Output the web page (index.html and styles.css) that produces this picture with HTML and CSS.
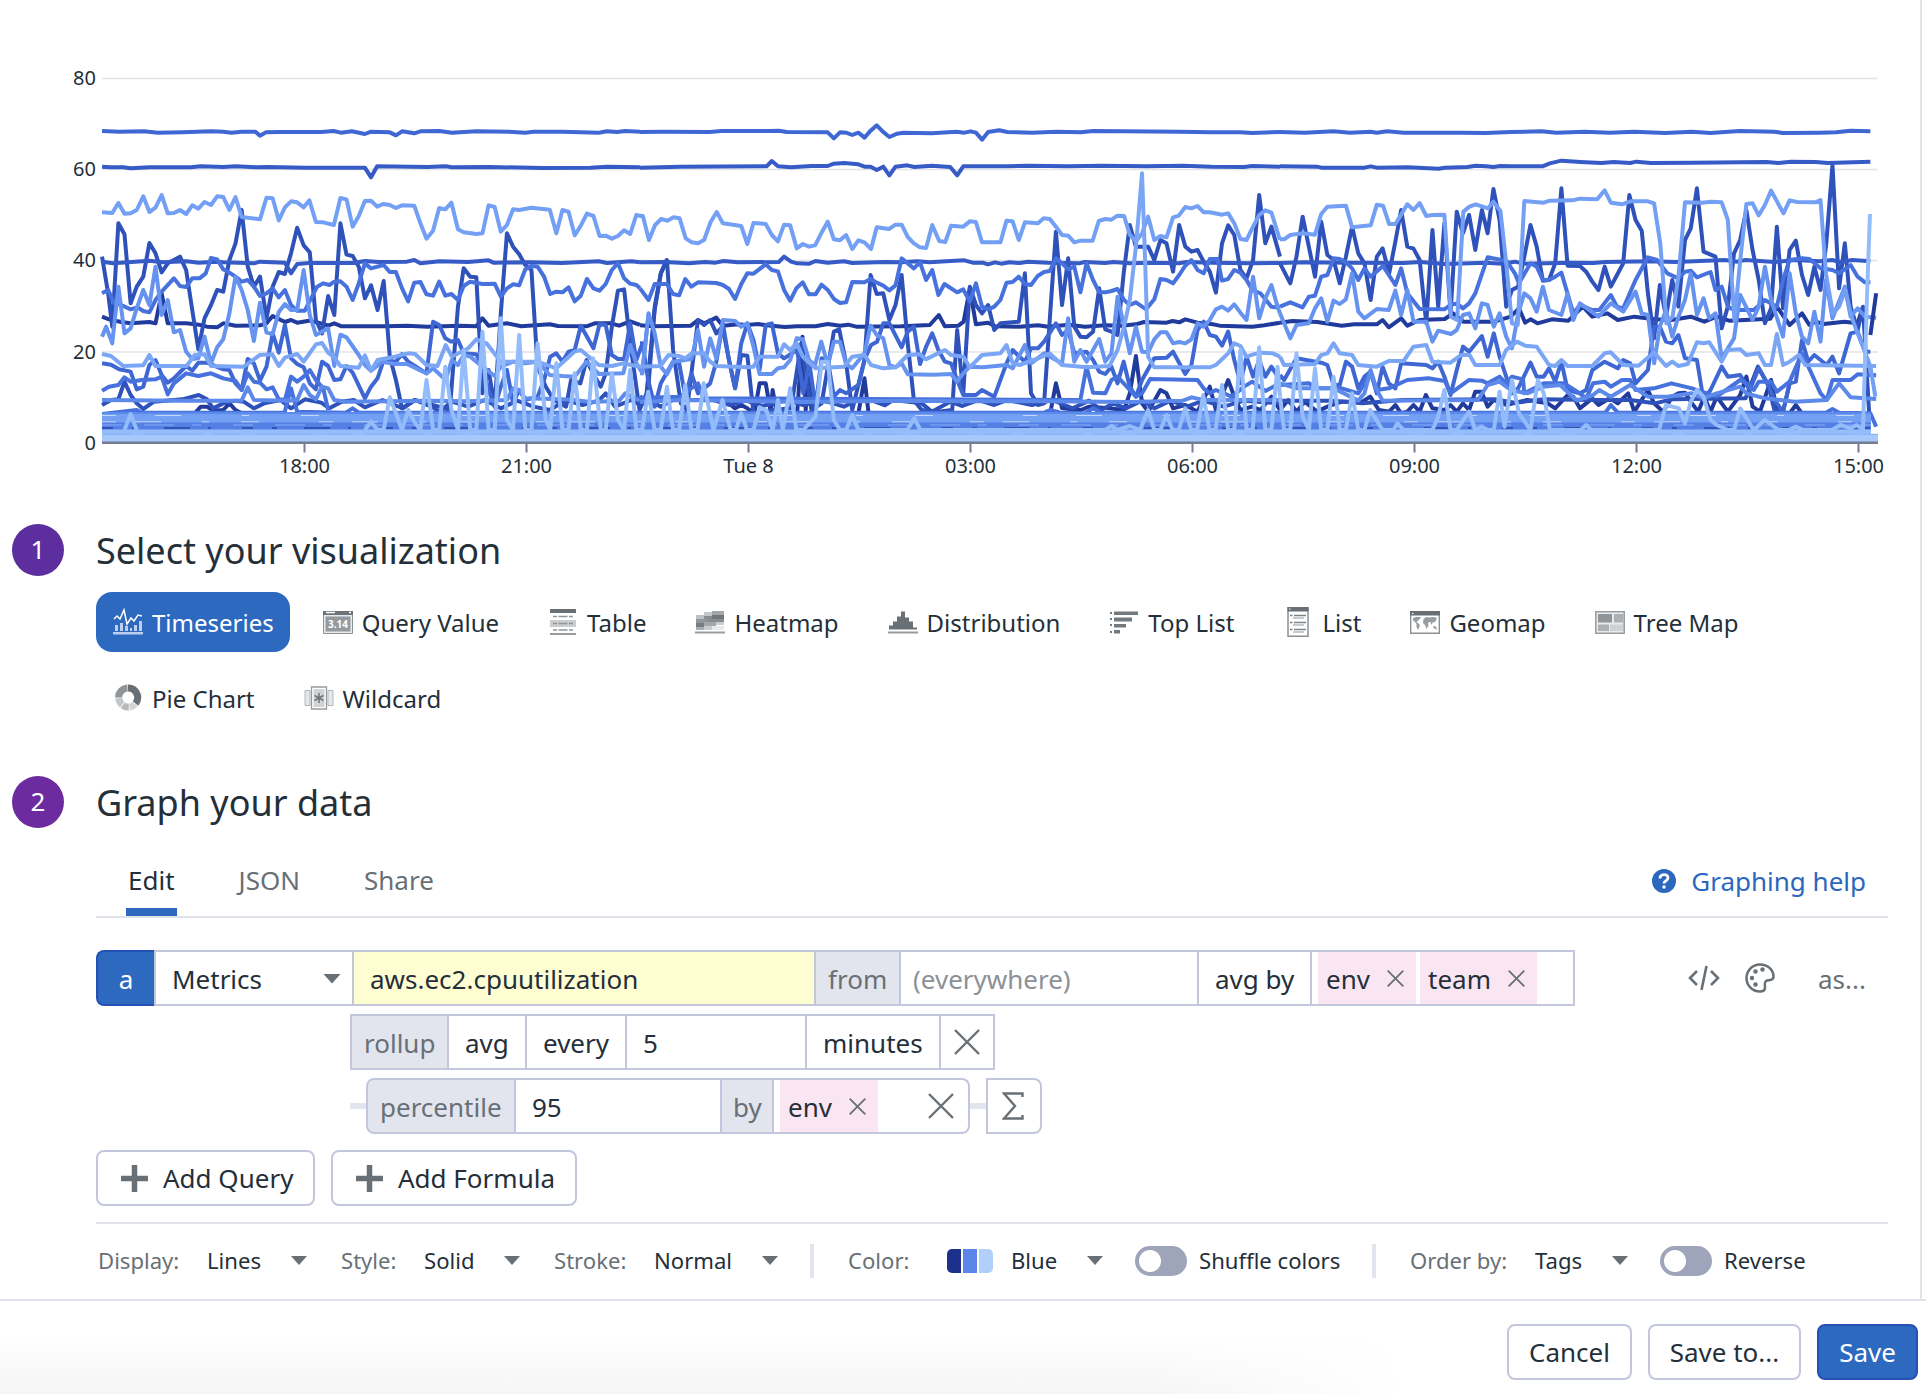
FILE: index.html
```html
<!DOCTYPE html>
<html lang="en">
<head>
<meta charset="utf-8">
<title>Graph editor</title>
<link rel="stylesheet" href="styles.css">
</head>
<body>
<main class="editor">
<svg class="chart" viewBox="0 0 1920 524" width="1920" height="524">
  <g class="grid"><path d="M102 78.5H1878M102 169.500H1878M102 260.500H1878M102 352H1878"/></g>
  <g class="lines" transform="translate(60 60) scale(.40816 .33333)">
    <polyline class="c1" points="103,770 120,778 150,786 173,790 219,786 234,790 249,700 264,790 309,790 340,794 360,800 385,802 400,790 430,797 490,796 506,790 521,768 551,786 566,780 581,788 610,782 640,790 657,797 672,790 690,799 800,799 850,797 900,800 980,797 1020,799 1035,775 1050,797 1095,790 1130,799 1200,793 1220,798 1290,799 1310,790 1350,790 1370,797 1397,784 1421,795"/>
    <polyline class="c1" points="330,1060 345,1040 360,1040 375,1052 400,1050 415,1030 430,1050 445,1060"/>
    <polyline class="c2" points="103,1035 125,1020 143,1018 158,965 173,1005 188,1030 204,1047 230,1025 300,1018 340,1005 360,1018 375,1045 400,1030 430,1022 450,1025 475,1045 500,1030 540,1020 566,1045 600,1018 640,1028 660,1045 690,1025 720,1020 747,1042 790,1020 840,1045 870,1020 910,1040 930,1055 960,1025 1000,1040 1040,1020 1080,1045 1120,1022 1160,1040 1200,1050 1240,1020 1280,1035 1320,1022 1337,1000 1360,1040 1400,1020 1421,1035"/>
    <polyline class="c2" points="103,590 118,700 128,800 143,490 158,523 173,730 188,680 204,650 219,549 234,580 249,637 264,610 294,590 309,630 324,750 339,868 354,775 370,735 385,690 400,695 415,600 430,550 445,450 460,620 475,680 490,650 506,775 521,680 536,636 551,642 566,580 581,503 597,556 612,577 627,780 642,820 657,708 672,765 687,490 702,584 717,588 732,620 747,715 762,676 778,750 793,663 808,890 823,960 838,1045 868,1020 898,1030 929,1040 955,1050 975,740 989,625 1005,650 1020,652 1035,1000 1050,930 1065,1040 1080,760 1095,520 1110,560 1125,583 1140,615 1155,630 1170,920 1190,980 1210,1020 1240,1040 1252,960 1275,970 1290,900 1310,950 1325,980 1337,940 1352,800 1367,692 1382,688 1397,850 1420,1050 1437,1000 1457,750 1472,640 1487,598"/>
    <polyline class="c3" points="103,320 125,322 155,322 173,325 220,322 320,322 345,319 400,321 430,319 480,322 510,321 600,323 747,323 762,352 777,319 900,321 945,319 960,322 1050,321 1180,324 1300,323 1340,320 1421,322"/>
    <polyline class="c3" points="103,605 130,610 220,602 250,607 310,604 340,608 380,605 400,607 475,610 490,605 551,608 566,640 581,612 610,609 720,609 747,603 780,606 850,605 868,600 883,610 930,604 1000,606 1050,601 1062,608 1150,607 1230,609 1320,604 1340,609 1400,604 1421,607"/>
    <polyline class="c4" points="103,213 145,215 205,214 240,218 300,217 370,214 400,215 420,218 445,215 478,215 490,227 505,217 540,216 640,216 670,213 688,218 715,214 747,222 762,215 808,217 823,226 838,214 868,220 883,214 930,213 960,218 1020,214 1100,215 1140,218 1160,215 1230,215 1320,218 1340,214 1365,216 1385,213 1421,215"/>
    <polyline class="c4" points="103,910 125,914 145,928 173,935 188,988 204,980 219,915 234,900 249,945 264,968 279,955 309,918 324,932 339,908 360,908 400,928 415,930 430,970 445,990 460,897 475,910 490,962 506,920 521,820 536,878 551,795 566,895 581,912 597,922 612,970 627,988 642,905 657,918 672,960 687,958 702,918 717,938 747,1015 762,980 778,955 793,900 823,905 838,882 853,905 898,940 914,785 929,795 944,835 959,845 975,840 989,880 1020,883 1035,920 1050,990 1065,1040 1080,980 1095,930 1110,1030 1125,990 1140,1020 1170,1010 1186,960 1201,890 1216,880 1231,905 1246,875 1261,870 1276,797 1307,865 1322,792 1337,795 1352,885 1367,897 1382,897 1397,790 1412,900 1427,850"/>
    <polyline class="c5" points="103,700 118,690 133,730 150,735 173,748 190,742 204,753 219,757 234,720 249,695 279,655 294,678 309,681 324,655 342,655 357,640 370,594 385,598 400,628 415,638 430,650 445,665 460,660 475,680 490,708 506,700 521,685 536,712 551,690 566,735 581,752 600,752 615,715 630,680 645,670 660,675 672,665 687,664 702,680 717,720 732,670 747,610 762,625 793,615 808,636 823,636 838,685 853,724 868,668 883,666 898,703 914,707 929,665 944,707 959,702 975,720 989,678 1005,665 1035,672 1065,671 1080,710 1095,685 1110,673 1125,676 1140,628 1155,618 1170,620 1186,650 1201,702 1216,695 1231,697 1246,682 1261,724 1276,707 1291,657 1307,685 1322,692 1337,672 1352,630 1367,610 1382,655 1397,671 1412,675 1421,685"/>
    <polyline class="c5" points="103,992 120,980 143,975 158,952 173,965 200,960 234,958 249,950 264,1003 279,970 309,940 339,948 370,940 400,955 430,963 445,990 460,940 475,965 490,968 506,988 521,982 536,1018 551,1020 566,950 581,965 597,950 612,930 627,960 645,985 657,1050"/>
    <polyline class="c5" points="103,1062 188,1050 200,1058 550,1058 566,985 581,1055 700,1058 717,1045 732,1058 1421,1058"/>
    <polyline class="c6" points="103,1020 300,1022 445,1022 460,982 475,1020 560,1022 581,1020 597,975 612,1005 627,1018 642,980 657,985 672,1020 700,1025 900,1022 1000,1024 1095,1020 1110,985 1125,990 1140,1015 1230,1018 1260,1020 1300,1026 1370,1022 1385,1000 1421,1022"/>
    <polyline class="c7" points="103,830 113,800 128,850 143,680 158,820 173,805 188,745 204,690 219,735 234,620 249,765 264,720 279,817 294,810 309,875 324,897 339,895 354,830 370,910 385,862 400,838 415,760 430,650 445,690 460,750 475,843 490,728 506,818 521,822 536,756 551,732 566,750 581,750 597,630 612,765 627,825 657,805 672,918 687,824 702,832 732,885 747,915 762,932 790,905 820,912 850,912 898,940 914,925 945,960 960,900 975,915 989,885 1005,890 1035,920 1065,948 1080,920 1110,905 1140,910 1170,905 1200,945 1231,948 1261,950 1290,905 1320,942 1380,940 1397,855 1412,910 1427,940 1442,760"/>
    <polyline class="c8" points="103,457 128,459 143,429 158,461 173,460 188,450 204,409 219,456 234,443 249,405 264,460 279,459 294,450 309,462 324,436 339,446 354,426 370,435 385,409 400,411 415,450 430,411 445,471 490,478 506,413 521,415 536,481 551,442 566,424 581,427 597,442 611,421 627,486 645,487 671,495 687,414 702,418 717,500 732,468 747,423 762,422 777,440 792,432 808,435 823,444 838,436 868,437 883,490 898,536 914,512 929,444 944,448 959,428 975,508 989,517 1020,522 1035,520 1050,436 1065,441 1080,515 1095,495 1110,448 1125,450 1155,443 1200,449 1216,520 1231,450 1246,455 1261,526 1276,497 1291,461 1307,468 1322,528 1337,527 1352,536 1367,528 1382,511 1397,522 1412,465 1427,469"/>
    <polyline class="c9" points="103,882 125,888 155,918 204,916 219,885 234,918 310,918 330,885 354,883 370,918 450,920 490,885 520,883 536,918 551,893 581,882 597,905 627,853 642,849 657,878 672,892 687,918 732,923 747,886 762,932 778,900 820,890 853,880 870,882 898,915 925,918 945,855 960,890 1000,865 1020,838 1045,850 1080,905 1170,905 1216,925 1260,875 1276,870 1300,895 1320,915 1352,918 1380,910 1421,920"/>
  </g>
  <g class="lines" transform="translate(640 60) scale(.40816 .33333)">
    <polyline class="c1" points="0,796 30,799 125,797 142,780 157,790 172,782 187,773 203,797 240,793 260,795 290,792 310,796 355,801 385,799 430,799 460,792 490,797 510,794 530,800 640,799 710,795 732,765 747,799 780,797 793,785 808,685 823,793 853,788 870,799 930,800 975,796 1000,800 1050,794 1090,800 1140,796 1180,797 1215,793 1235,786 1290,788 1305,783 1321,787 1336,778 1366,788 1400,792 1420,797 1500,800 1530,796 1568,788"/>
    <polyline class="c1" points="200,1035 218,1030 233,1045 248,1035 263,1045 280,1060 293,970 308,970 320,1055 325,990 335,1060 385,1060 398,830 406,1050 413,910 425,1060 535,1060 550,955 560,1060 1005,1060 1019,970 1034,1045 1080,1050 1100,1040 1150,1045 1186,1050 1200,1000 1215,888 1230,1030 1245,1055 1275,990 1290,1000 1306,1045 1336,1035 1366,1055 1396,980 1411,1050 1441,960 1456,1010 1471,1050 1500,1040 1520,1050 1547,1010 1568,1050"/>
    <polyline class="c2" points="0,1030 30,1025 51,1040 80,1020 180,1020 220,1035 260,1022 300,1038 360,1020 400,1035 450,1022 500,1040 530,1020 570,1022 600,1036 620,1020 690,1030 715,1055 760,1025 790,1038 830,1020 868,1035 900,1020 960,1035 1010,1020 1060,1045 1100,1022 1130,1050 1160,1030 1190,1045 1230,1022 1260,1045 1300,1022 1340,1040 1380,1022 1430,1040 1480,1022 1568,1030"/>
    <polyline class="c2" points="0,1010 18,1020 36,740 51,640 66,600 81,870 100,1030 115,1050 142,780 157,795 172,780 187,820 202,800 218,900 233,985 248,885 263,887 278,1060 325,1050 370,1045 395,850 420,1050 445,1030 475,815 488,808 505,910 520,1050 550,900 565,645 580,702 596,700 611,780 626,735 641,645 656,850 671,1020 690,1050 730,1055 765,1050 777,810 792,1000 808,680 823,735 838,760 853,735 868,810 883,790 928,785 943,640 958,1000 975,1035 990,1030 1005,760 1019,515 1034,735 1049,595 1064,800 1079,830 1094,832 1110,815 1125,685 1140,808 1155,815 1170,825 1185,640 1200,495 1215,560 1245,560 1260,600 1275,540 1290,550 1306,635 1321,495 1336,560 1351,575 1366,570 1381,605 1396,635 1411,698 1426,550 1441,496 1456,525 1471,630 1486,655 1502,600 1517,405 1532,550 1547,500 1568,590"/>
    <polyline class="c3" points="0,323 100,320 310,319 323,303 338,319 370,322 420,318 460,318 475,311 500,309 535,313 550,320 565,320 580,330 596,320 611,346 626,320 655,316 672,321 715,317 760,321 777,346 792,319 900,319 950,317 1050,319 1130,317 1240,319 1330,317 1400,320 1480,321 1500,318 1568,320"/>
    <polyline class="c3" points="0,607 60,606 120,610 160,606 185,608 205,603 240,607 340,606 353,590 370,605 385,610 415,611 430,603 460,608 500,604 520,609 600,606 640,607 680,604 710,607 750,604 795,601 815,608 840,608 852,613 870,607 885,611 905,607 930,609 950,605 1000,608 1075,610 1090,606 1140,609 1160,606 1200,610 1250,608 1320,610 1340,606 1400,608 1500,610 1568,609"/>
    <polyline class="c4" points="0,216 60,215 170,216 200,213 320,213 340,212 360,216 460,217 475,235 490,217 505,218 520,225 535,218 550,233 565,212 580,196 595,215 611,231 630,221 645,218 715,220 775,215 795,218 810,214 823,218 838,239 853,216 880,211 900,216 960,218 1020,215 1080,217 1110,213 1320,215 1400,217 1470,217 1500,219 1568,216"/>
    <polyline class="c4" points="0,850 6,850 20,960 36,1040 51,970 81,905 96,910 111,1010 126,940 142,1000 172,970 187,905 203,790 218,900 233,985 248,850 263,790 278,840 293,930 308,795 323,790 338,880 353,895 385,870 400,1000 415,910 430,1040 445,895 460,900 475,1010 490,990 505,1000 535,975 550,900 566,855 581,845 596,790 611,790 641,862 656,815 671,800 686,912 701,860 716,820 731,870 747,905 762,910 777,960 792,1005 823,1005 838,990 868,1010 898,910 913,870 928,888 943,905 958,865 975,865 990,845 1019,790 1034,825 1049,810 1064,880 1094,875 1110,900 1125,935 1140,942 1155,920 1170,970 1185,905 1200,980 1215,1010 1230,960 1260,895 1290,893 1306,875 1336,942 1351,915 1366,810 1381,785 1396,825 1411,830 1426,857 1441,815 1456,900 1471,970 1486,890 1502,950 1517,900 1532,950 1547,920 1568,960"/>
    <polyline class="c5" points="0,685 21,720 36,672 66,672 81,702 96,706 111,657 126,680 142,667 187,669 203,675 218,687 233,717 248,673 263,640 278,641 308,613 323,630 338,634 353,690 368,722 383,685 399,667 414,703 430,703 445,674 460,690 475,717 490,729 505,727 520,666 550,667 565,657 580,668 596,677 611,691 626,676 641,595 656,610 671,625 686,607 701,660 716,630 731,705 746,672 777,697 792,688 808,725 823,670 838,740 853,748 868,740 883,720 898,668 913,666 928,650 943,672 958,675 975,647 990,636 1004,633 1019,595 1034,610 1049,628 1064,620 1079,697 1094,610 1110,660 1125,697 1140,697 1155,693 1170,687 1186,720 1200,735 1215,727 1240,748 1260,718 1275,657 1290,660 1306,670 1321,645 1336,617 1351,600 1366,630 1381,640 1396,597 1415,597 1426,662 1441,657 1456,630 1471,638 1486,660 1500,690 1520,700 1547,740 1568,743"/>
    <polyline class="c5" points="0,1015 50,1012 100,1010 120,990 142,970 157,1015 1079,1020 1094,920 1110,998 1140,1000 1155,960 1170,950 1200,990 1215,1010 1230,1000 1250,957 1366,960 1381,985 1396,1000 1411,990 1450,1010 1480,980 1500,965 1532,993 1568,970"/>
    <polyline class="c5" points="0,1058 990,1058 1005,1050 1030,1058 1090,1060 1110,1045 1130,1058 1568,1058"/>
    <polyline class="c6" points="0,1026 100,1020 240,1022 400,1026 640,1022 800,1024 1000,1024 1200,1026 1330,1022 1352,1012 1380,1020 1568,1020"/>
    <polyline class="c7" points="0,940 5,940 21,760 36,820 51,920 66,943 82,905 126,897 142,810 157,920 172,835 187,895 203,780 233,783 248,800 263,790 278,860 293,942 323,942 338,925 353,922 368,900 384,835 399,838 414,900 429,915 444,845 460,915 475,845 490,845 505,912 520,925 550,880 565,797 580,825 596,835 611,915 626,922 641,910 656,943 720,944 762,942 777,965 792,940 808,920 840,922 898,915 913,925 943,855 958,910 990,880 1019,900 1034,910 1049,775 1064,905 1079,870 1094,905 1110,870 1125,837 1140,905 1155,880 1170,710 1186,800 1200,880 1215,800 1230,875 1245,877 1260,838 1275,817 1290,817 1306,850 1321,846 1336,850 1351,838 1366,790 1381,800 1396,780 1411,748 1426,740 1441,752 1456,733 1471,758 1486,780 1502,650 1517,775 1532,715 1547,675 1562,740 1568,760"/>
    <polyline class="c8" points="0,467 7,468 22,540 37,495 52,477 67,482 82,472 97,475 112,535 127,547 142,550 157,540 173,486 188,456 203,490 248,498 263,552 278,489 308,492 323,525 338,544 353,494 368,496 384,565 399,552 414,560 429,556 444,520 460,485 475,538 490,541 505,525 520,567 535,541 550,547 566,567 580,502 610,507 626,494 641,494 656,531 671,550 686,562 701,564 716,495 733,543 748,546 762,497 792,500 808,484 823,486 838,547 883,547 898,482 913,484 928,540 943,487 975,490 989,475 1004,477 1019,500 1034,525 1049,527 1064,547 1079,542 1109,542 1124,483 1140,477 1155,479 1170,467 1186,468 1200,524 1215,545 1230,520 1245,470 1260,540 1275,528 1290,532 1306,472 1320,467 1336,441 1351,445 1366,438 1381,457 1396,457 1426,464 1441,460 1456,490 1471,537 1486,540 1502,500 1517,465 1532,451 1547,458 1568,540"/>
    <polyline class="c9" points="0,920 50,918 70,885 95,888 111,895 127,880 157,880 172,905 187,918 263,922 278,920 293,890 338,890 353,853 368,870 384,850 399,890 430,925 500,920 520,890 550,885 566,915 596,925 626,922 656,885 686,883 700,898 730,880 747,870 762,885 792,890 808,922 838,885 883,880 898,855 913,910 930,915 975,895 1004,880 1034,915 1094,922 1150,918 1170,870 1186,800 1200,720 1215,560 1230,340 1238,620 1245,890 1260,922 1396,922 1411,915 1441,880 1456,850 1471,858 1486,890 1517,878 1550,880 1568,890"/>
  </g>
  <g class="lines" transform="translate(1280 60) scale(.41199 .33333)">
    <polyline class="c1" points="0,788 30,783 90,786 150,797 180,793 235,793 249,780 264,802 294,775 309,797 339,780 400,777 420,760 445,785 520,785 560,770 580,745 595,788 608,778 625,790 660,778 700,782 735,740 758,770 795,760 820,780 860,770 910,778 950,780 997,770 1030,785 1060,770 1090,782 1190,776 1206,740 1237,795 1267,760 1285,795 1300,785 1320,792 1370,785 1402,790 1415,740"/>
    <polyline class="c1" points="0,1050 20,1020 40,1055 60,1025 90,1055 115,1040 150,1025 200,1025 219,1010 240,1050 265,1055 280,1035 294,1060 309,1055 324,1035 339,1055 354,1005 370,1045 399,1050 414,1035 429,1055 444,1030 459,1050 474,995 489,995 504,1040 519,1020 549,1035 600,1020 650,1030 668,1045 698,1005 712,1010 728,1045 758,1015 773,1035 800,1015 820,1030 845,1000 860,1055 893,990 908,1030 930,1055 952,1010 967,1000 983,998 1000,1030 1015,1055 1030,1010 1045,1055 1060,1010 1087,1055 1117,1005 1132,950 1147,1040 1165,1055 1192,960 1206,1055 1237,1060 1252,1035 1267,1060"/>
    <polyline class="c2" points="0,610 25,670 40,590 55,470 70,560 85,650 100,485 115,585 130,600 145,670 160,590 175,500 190,580 205,610 220,720 235,590 249,565 265,640 280,545 294,450 309,560 324,566 339,600 355,790 370,510 384,740 399,490 414,760 429,455 444,520 459,465 474,570 490,450 504,520 518,387 533,480 549,740 563,690 578,680 593,590 608,495 623,560 638,662 653,660 668,610 683,385 698,617 728,618 743,635 758,665 773,690 788,620 803,680 818,645 833,610 848,405 863,480 878,512 893,700 908,835 922,675 937,770 952,660 967,740 983,540 997,505 1012,385 1028,575 1057,590 1072,805 1087,740 1102,580 1117,540 1132,450 1147,570 1162,660 1177,790 1192,745 1206,500 1221,745 1237,570 1252,542 1267,645 1282,705 1297,620 1312,690 1326,550 1341,315 1357,685 1371,550 1385,740 1402,810 1415,740 1430,1060"/>
    <polyline class="c2" points="0,1022 130,1022 200,1030 300,1020 520,1018 570,1028 640,1018 760,1020 850,1020 910,1030 950,1018 1130,1015 1160,920 1185,975 1200,1050 1221,1055 1237,970"/>
    <polyline class="c3" points="0,319 90,320 100,323 205,323 220,319 235,323 310,322 385,326 400,323 455,321 475,317 500,319 518,321 535,318 560,319 637,319 655,310 683,302 730,306 780,309 810,306 850,309 865,305 900,309 1000,308 1180,306 1210,309 1240,305 1300,306 1330,309 1433,305"/>
    <polyline class="c3" points="0,609 60,607 160,608 300,609 340,606 400,612 500,608 540,611 570,605 590,611 700,608 760,609 790,606 900,604 960,606 1080,600 1110,605 1130,600 1200,606 1250,600 1310,604 1340,600 1360,606 1390,600 1433,604"/>
    <polyline class="c4" points="0,216 60,218 130,214 170,218 220,215 235,218 260,214 300,218 440,218 500,219 560,216 635,214 670,218 740,215 800,218 860,215 935,219 1000,215 1045,219 1115,213 1200,215 1220,219 1310,218 1350,217 1385,212 1433,214"/>
    <polyline class="c4" points="0,945 10,960 40,895 100,908 115,915 130,975 145,975 160,905 175,920 190,985 205,950 220,935 235,1000 249,920 264,970 280,985 294,910 355,915 370,925 384,905 399,950 414,1005 429,930 444,860 459,875 490,828 504,890 519,820 533,890 549,950 563,1000 578,985 608,908 623,950 640,950 653,925 668,965 683,905 698,990 728,1000 743,990 758,930 788,905 820,925 833,900 850,910 863,970 893,930 908,800 922,800 937,845 952,850 967,825 983,895 1012,900 1028,1020 1045,990 1072,920 1087,950 1117,945 1140,990 1162,925 1185,975 1200,1020 1221,1055 1237,970 1252,965 1267,840 1282,905 1297,885 1327,915 1341,890 1357,940 1385,820 1402,815 1420,875 1433,875"/>
    <polyline class="c5" points="0,740 25,727 55,742 70,710 85,707 100,650 115,645 130,595 145,597 160,607 175,625 190,660 205,625 220,650 250,618 280,675 294,625 309,700 339,747 399,748 414,735 429,730 444,745 459,730 474,700 504,592 550,603 570,640 580,670 608,610 623,620 638,660 653,660 668,650 683,638 712,760 728,735 758,750 775,750 803,705 818,740 833,745 863,660 893,592 915,600 940,640 967,655 983,635 997,632 1012,652 1045,636 1057,690 1072,680 1087,740 1102,750 1150,750 1177,720 1206,740 1221,660 1237,600 1267,595 1285,597 1312,625 1341,630 1357,640 1385,615 1402,650 1420,667 1433,667"/>
    <polyline class="c5" points="0,975 70,970 90,985 150,985 190,1000 220,940 235,990 264,985 309,960 360,955 400,963 414,1000 459,960 490,962 504,970 533,950 549,970 563,950 590,958 593,1000 640,970 690,970 728,1000 743,1015 760,970 788,965 803,980 830,960 850,960 863,990 908,985 950,970 1000,985 1060,1010 1117,960 1132,970 1150,990 1162,965 1192,965 1206,995 1237,965 1267,880 1290,940 1312,1000 1327,1020 1341,960 1385,960 1402,943 1447,946"/>
    <polyline class="c5" points="0,1058 790,1058 803,1035 820,1058 1325,1058 1341,1047 1357,1058 1433,1060 1447,1100"/>
    <polyline class="c6" points="0,970 40,985 60,985 130,985 190,1022 205,1000 220,930 235,990 249,1022 480,1020 504,975 533,965 560,990 600,1000 640,980 680,975 720,1022 760,1005 775,990 803,1010 850,975 893,1010 940,1010 1000,1000 1028,1015 1060,1000 1117,980 1132,1000 1177,1015 1250,1025 1327,1020 1357,970 1385,1012 1447,1017"/>
    <polyline class="c7" points="0,760 25,835 40,795 70,790 85,745 100,715 115,785 130,722 145,732 160,718 175,640 190,755 205,775 235,747 264,750 280,692 294,765 309,690 324,785 355,785 370,845 384,812 415,822 429,810 444,765 459,760 474,805 490,730 504,735 519,800 533,760 549,830 563,865 578,760 593,700 608,715 623,755 638,680 653,750 683,765 698,700 712,780 728,730 773,770 803,730 833,755 863,695 878,760 893,765 908,910 922,800 937,750 952,830 967,770 983,720 997,640 1012,765 1028,715 1042,775 1057,760 1072,895 1102,835 1117,705 1147,780 1162,740 1177,620 1192,720 1221,830 1237,640 1252,760 1267,830 1282,850 1297,755 1312,845 1325,660 1341,775 1371,680 1385,770 1402,745 1420,770 1447,773"/>
    <polyline class="c8" points="0,538 10,538 25,525 55,520 85,524 100,462 115,440 160,437 175,502 220,496 235,434 250,437 265,492 280,492 295,462 309,433 324,450 339,429 355,468 370,465 399,464 415,770 430,780 445,455 460,440 475,433 505,445 518,425 535,453 550,620 563,790 577,795 593,423 640,428 655,422 710,421 728,416 770,418 788,391 803,428 830,433 850,424 893,424 908,430 923,550 938,790 953,770 968,640 983,427 1025,428 1045,425 1072,427 1087,480 1103,780 1118,590 1132,432 1147,430 1162,466 1177,435 1192,392 1222,460 1237,421 1255,426 1300,427 1312,420 1325,640 1342,760 1357,740 1372,690 1387,770 1402,820 1415,860 1433,920 1445,1010"/>
    <polyline class="c9" points="0,890 10,915 85,912 100,885 115,880 130,850 145,880 175,885 190,915 235,920 264,903 300,903 324,860 355,855 370,905 414,908 440,885 460,885 474,915 533,915 549,870 575,845 595,857 623,860 653,915 668,918 683,900 698,918 758,918 788,880 803,877 833,915 870,917 908,877 937,918 952,905 967,918 990,912 1012,847 1028,850 1042,847 1072,905 1087,870 1117,868 1132,885 1162,880 1177,915 1192,915 1206,822 1221,915 1237,905 1260,885 1275,915 1447,918"/>
    <polyline class="c1" points="1433,825 1447,700"/>
  </g>
  <!-- densely packed hosts below 6% -->
  <g class="dense">
    <path stroke="#5c8aeb" stroke-width="3" d="M102 413.500H1871"/>
    <path stroke="#74a0f4" stroke-width="9" d="M102 418.500H1871"/>
    <path stroke="#c3d7fb" stroke-width="1" stroke-dasharray="14 39 26 61 7 52 18 90" d="M102 415.500H1871"/>
    <path stroke="#dfeafd" stroke-width="1.200" stroke-dasharray="14 19 26 41 7 32 18 60" d="M102 422H1871"/>
    <path stroke="#5480e6" stroke-width="8" d="M102 426.500H1871"/>
    <path stroke="#86aef7" stroke-width="1.200" stroke-dasharray="20 22 30 18 9 32" d="M102 425H1871"/>
    <path stroke="#2846a8" stroke-width="1.500" stroke-dasharray="11 19 5 27 26 18 3 31" d="M102 428H1871"/>
    <path stroke="#94bdfa" stroke-width="6" d="M102 432.500H1871"/>
    <path stroke="#8ab4f8" stroke-width="1.500" stroke-dasharray="30 12 60 8" d="M102 434.500H1878"/>
    <path stroke="#a5c9fb" stroke-width="7" d="M102 438.500H1878"/>
  </g>
  <g class="lines spikes" transform="translate(60 60) scale(.40816 .33333)"><polyline points="158,1110 173,1062 188,1110"/><polyline points="747,1110 762,1085 778,1110 793,1110 808,1012 823,1060 838,1110 853,1050 868,1085 883,1110 898,960 914,1110 929,1110 944,920 959,1050 975,1110 989,870 1005,1110 1020,1110 1035,815 1050,1110 1065,1110 1080,775 1095,1080 1110,1110 1125,825 1140,1110 1155,1110 1170,850 1190,1080 1201,1110 1216,910 1231,1110 1246,1110 1261,940 1276,1110 1291,1110 1306,895 1325,1110 1337,1110 1352,940 1367,1080 1382,1110 1397,930 1412,1110 1427,1110"/></g>
  <g class="lines spikes" transform="translate(640 60) scale(.40816 .33333)"><polyline points="5,1110 20,995 36,1110 51,1110 66,980 81,1110 96,1110 111,975 126,1110 141,1110 156,970 180,1110 202,1020 222,1110 235,1110 248,1060 262,1110 278,1110 293,1042 310,1052 325,1110 338,1020 350,1110 368,985 383,1110 400,1110 430,1070 445,905 460,905 475,1080 490,1110 505,1110 520,1065 535,1110 655,1110 672,1075 687,1110 1140,1110 1155,1098 1170,1110 1200,1098 1225,1110 1245,1050 1260,1110 1275,1110 1290,1065 1305,1110 1320,1110 1336,1045 1350,1110 1365,1110 1380,1005 1395,1110 1410,1110 1426,975 1441,1110 1456,1110 1471,870 1486,1110 1501,1110 1517,862 1532,1110 1547,1110 1562,920 1568,1010"/></g>
  <g class="lines spikes" transform="translate(1280 60) scale(.41199 .33333)"><polyline points="0,1010 10,1110 25,1110 40,880 55,1070 70,1110 85,925 100,1110 115,1110 130,950 145,1110 160,1110 175,1000 190,1110 205,1110 219,1050 249,1110 275,1110 285,1090 300,1110 370,1110 384,1070 399,990 414,1110 429,1110 459,1055 474,1110 489,1100 505,1110 519,1110 533,995 545,1100 563,960 580,1060 608,1110 626,960 640,1000 655,1110 730,1110 743,1095 755,1110 920,1110 937,1035 968,1045 983,1090 997,1025 1012,990 1028,1010 1045,1080 1060,1095 1087,1110 1102,1110 1117,1045 1150,1110 1177,1080 1210,1110 1235,1110 1252,1100 1270,1110 1340,1110 1360,1095 1385,1105 1400,1095 1415,1110 1425,700 1432,462"/></g>
  <path stroke="#747d94" stroke-width="2.500" d="M102 442.700H1878"/>
  <path stroke="#747d94" stroke-width="2" d="M304.500 443V452.500M526.500 443V452.500M748.500 443V452.500M970.500 443V452.500M1192.500 443V452.500M1414.500 443V452.500M1636.500 443V452.500M1858.500 443V452.500"/>
  <g class="axis" text-anchor="end"><text x="96" y="85">80</text><text x="96" y="176">60</text><text x="96" y="267">40</text><text x="96" y="359">20</text><text x="96" y="450">0</text></g>
  <g class="axis" text-anchor="middle"><text x="304.500" y="473">18:00</text><text x="526.500" y="473">21:00</text><text x="748.500" y="473">Tue 8</text><text x="970.500" y="473">03:00</text><text x="1192.500" y="473">06:00</text><text x="1414.500" y="473">09:00</text><text x="1636.500" y="473">12:00</text><text x="1858.500" y="473">15:00</text></g>
</svg>

<section class="step">
  <header class="step-head"><span class="badge">1</span><h2>Select your visualization</h2></header>
  <div class="viz-list">
    <button class="viz active"><svg width="30" height="30" viewBox="0 0 30 30"><path d="M1 12l3-3 3 3 4-9 3 14 4-6 3 3 4-6 4 1" fill="none" stroke="#fff" stroke-width="1.500"/><path d="M2 18h3v6H2zM7 16h3v8H7zM12 19h3v5h-3zM17 21h2v3h-2zM21 18h3v6h-3zM26 14h3v10h-3zM0 25h30v2.500H0z" fill="#bcd0ee"/></svg><span>Timeseries</span></button>
    <button class="viz"><svg width="30" height="30" viewBox="0 0 30 30"><path d="M.5 4.500h29v22H.5z" fill="#e9eaeb" stroke="#8c9195"/><path d="M0 4h30v4H0z" fill="#6d7378"/><path d="M3 5.500h9M26 5.500h2" stroke="#fff" stroke-width="1.300"/><path d="M2.500 9.500h25v15h-25z" fill="#949a9e"/><text x="15" y="21" text-anchor="middle" class="pi">3.14</text></svg><span>Query Value</span></button>
    <button class="viz"><svg width="30" height="30" viewBox="0 0 30 30"><path d="M2 2h26v4H2z" fill="#687076"/><path d="M2 13h26v7H2z" fill="#cbcdcf"/><path d="M5 9.500h20M5 16.500h20M5 23h20" stroke="#8f9599" stroke-width="1.500" stroke-dasharray="4 1.500 9 1.500"/><path d="M2 26h26v2H2z" fill="#969b9f"/></svg><span>Table</span></button>
    <button class="viz"><svg width="30" height="30" viewBox="0 0 30 30"><path d="M1 8h8v4H1z" fill="#bfc2c4"/><path d="M9 5h8v4H9z" fill="#c5c7c9"/><path d="M17 4h12v4H17z" fill="#a3a7aa"/><path d="M1 12h12v4H1z" fill="#90969a"/><path d="M9 9h8v3H9zM13 12h16v3H13z" fill="#868c90"/><path d="M17 8h12v4H17z" fill="#70777c"/><path d="M1 16h8v4H1z" fill="#777e83"/><path d="M9 15h12v4H9z" fill="#a3a8ab"/><path d="M21 15h8v3h-8zM9 19h8v4H9z" fill="#c9cbcd"/><path d="M1 20h8v3H1z" fill="#aaaeb1"/><path d="M17 19h12v4H17z" fill="#e8e9ea"/><path d="M0 24.500h30v2H0z" fill="#999ea2"/></svg><span>Heatmap</span></button>
    <button class="viz"><svg width="30" height="30" viewBox="0 0 30 30"><path d="M1 22.500v-4h4v-4h4V9.500h4v-5h4v6h4v4h4v6h4v2z" fill="#697177"/><path d="M0 24.500h30v2H0z" fill="#969b9f"/></svg><span>Distribution</span></button>
    <button class="viz"><svg width="30" height="30" viewBox="0 0 30 30"><path d="M5 4.500h24v3.500H5zM5 10.500h18v4H5zM5 17h12v3.500H5zM5 23h6v3.500H5zM1 5h2v2H1zM1 11h2v2H1zM1 17h2v2H1zM1 24h2v2H1z" fill="#727a7f"/></svg><span>Top List</span></button>
    <button class="viz"><svg width="30" height="30" viewBox="0 0 30 30"><path d="M5 .7h20v28.600H5z" fill="#fff" stroke="#8c9195" stroke-width="1.500"/><path d="M4.500 0h21v4.500h-21z" fill="#687076"/><path d="M7 8.500h2.500M11 8.500h12M7 15.500h2.500M11 15.500h12M7 22.500h2.500M11 22.500h12" stroke="#7d8489" stroke-width="1.700"/><path d="M10 11h11M10 18h11M10 25h11" stroke="#b6babc" stroke-width="1.500"/><path d="M6 2h1.500" stroke="#fff"/></svg><span>List</span></button>
    <button class="viz"><svg width="30" height="30" viewBox="0 0 30 30"><path d="M.7 4.700h28.600v21.600H.7z" fill="#fff" stroke="#8c9195" stroke-width="1.400"/><path d="M0 4h30v4.500H0z" fill="#687076"/><path d="M2 6.500h1.500" stroke="#fff"/><path d="M3 11l3-1 5 0-1.500 2.500-2 1.500-1 1 2 1.500 1.500 2-2 4.500-1.500-3 0-3-1.500-2-2-1.500zM13.500 12l2.500-2 3 .5 5-.5 3 1-1 2.500-1.500 2-1.500-.5-1.500 3-1-3-2.500.5.500 3-2 3.500-1.500-4-2-2zM23 19l3 .5 1 3-3-1z" fill="#989da1"/></svg><span>Geomap</span></button>
    <button class="viz"><svg width="30" height="30" viewBox="0 0 30 30"><path d="M.8 4.800h28.400v21.400H.8z" fill="#e9eaec" stroke="#999ea2" stroke-width="1.600"/><path d="M3 7h14v8.500H3z" fill="#8f9599"/><path d="M19 7h9v8.500h-9zM3 17.500h11v6.500H3z" fill="#acb0b3"/><path d="M15 17.500h13v6.500H15z" fill="#cfd1d3"/></svg><span>Tree Map</span></button>
    <button class="viz"><svg width="30" height="30" viewBox="0 0 30 30"><g fill="none" stroke-width="7"><path d="M15 5a9.500 9.500 0 0 1 7.500 15.500" stroke="#687076"/><path d="M22 21a9.500 9.500 0 0 1-5.500 3.100" stroke="#d3d5d7"/><path d="M15.800 24.200a9.500 9.500 0 0 1-6-2" stroke="#b6babc"/><path d="M9.200 21.700a9.500 9.500 0 0 1-3.500-6.500" stroke="#c4c7c9"/><path d="M5.600 14.500A9.500 9.500 0 0 1 14.500 5" stroke="#8f9599"/></g></svg><span>Pie Chart</span></button>
    <button class="viz"><svg width="30" height="30" viewBox="0 0 30 30"><path d="M1 7.500h5v15H1zM24 7.500h5v15h-5z" fill="#e6e7e8" stroke="#b3b7ba"/><path d="M7.500 4h15v22h-15z" fill="#fff" stroke="#969b9f" stroke-width="1.300"/><path d="M9.500 6h11v18h-11z" fill="#d0d2d4"/><path d="M15 10v10M10.500 12.500l9 5M19.500 12.500l-9 5" stroke="#6d7479" stroke-width="1.500"/></svg><span>Wildcard</span></button>
  </div>
</section>

<section class="step step-two">
  <header class="step-head"><span class="badge violet">2</span><h2>Graph your data</h2></header>
  <div class="body">
    <nav class="tabs"><span class="tab on">Edit</span><span class="tab json">JSON</span><span class="tab share">Share</span>
      <a class="help"><svg width="24" height="24" viewBox="0 0 24 24"><circle cx="12" cy="12" r="12" fill="#2b67bd"/><path d="M8 9.500c0-5 8-5 8-.5 0 3-4 2.500-4 5.500" fill="none" stroke="#fff" stroke-width="2.800"/><path d="M10.500 16.500h3v3h-3z" fill="#fff"/></svg>Graphing help</a></nav>
    <div class="query">
      <span class="letter">a</span>
      <span class="cell metrics">Metrics<i class="caret big"></i></span>
      <span class="cell metric">aws.ec2.cpuutilization</span>
      <span class="cell key from">from</span>
      <span class="cell scope">(everywhere)</span>
      <span class="cell avgby">avg by</span>
      <span class="cell tags"><span class="tag env">env<svg width="17" height="17" viewBox="0 0 17 17"><path d="M.7.700l15.600 15.600M16.300.700L.700 16.300"/></svg></span><span class="tag team">team<svg width="17" height="17" viewBox="0 0 17 17"><path d="M.7.700l15.600 15.600M16.300.700L.700 16.300"/></svg></span></span>
      <span class="tools"><svg width="32" height="26" viewBox="0 0 32 26"><path d="M9 6l-7 7 7 7M23 6l7 7-7 7M18.500 1l-5 24" fill="none" stroke="#687076" stroke-width="2.600"/></svg>
      <svg width="30" height="30" viewBox="0 0 30 30"><path d="M15 1.500C7 1.500 1.500 8 1.500 15S7 28.500 15 28.500c3 0 5-1.500 5-4 0-3-1-5 1-6.500s7.500.5 7.500-4.500C28.500 6.500 22.500 1.500 15 1.500z" fill="none" stroke="#687076" stroke-width="2.500"/><g fill="#687076"><circle cx="10.500" cy="8.500" r="2.200"/><circle cx="17.500" cy="6.500" r="2.200"/><circle cx="7" cy="15" r="2.200"/><circle cx="10.500" cy="21.500" r="2.200"/></g></svg>
      <span class="as">as...</span></span>
    </div>
    <div class="query rollup">
      <span class="cell key first">rollup</span><span class="cell fn">avg</span><span class="cell every">every</span><span class="cell n">5</span><span class="cell unit">minutes</span>
      <span class="cell close"><svg width="26" height="26" viewBox="0 0 26 26"><path d="M1 1l24 24M25 1L1 25"/></svg></span>
    </div>
    <div class="query percentile">
      <i class="link"></i>
      <span class="cell key pfirst">percentile</span><span class="cell p">95</span><span class="cell key by">by</span>
      <span class="cell ptags"><span class="tag env">env<svg width="17" height="17" viewBox="0 0 17 17"><path d="M.7.700l15.600 15.600M16.300.700L.700 16.300"/></svg></span><svg class="x" width="26" height="26" viewBox="0 0 26 26"><path d="M1 1l24 24M25 1L1 25"/></svg></span>
      <i class="link"></i>
      <span class="sigma"><svg width="22" height="28" viewBox="0 0 22 28"><path d="M20.500 5V1.500H2L13 14 2 26.500h18.500V23" fill="none" stroke="#687076" stroke-width="2.400"/></svg></span>
    </div>
    <div class="adds">
      <button class="btn add q"><svg width="27" height="27" viewBox="0 0 27 27"><path d="M13.500 0v27M0 13.500h27" stroke="#687076" stroke-width="5.500"/></svg><span>Add Query</span></button>
      <button class="btn add f"><svg width="27" height="27" viewBox="0 0 27 27"><path d="M13.500 0v27M0 13.500h27" stroke="#687076" stroke-width="5.500"/></svg><span>Add Formula</span></button>
    </div>
    <div class="options">
      <span class="lab w-display">Display:</span><span class="val w-lines">Lines<i class="caret"></i></span>
      <span class="lab w-style">Style:</span><span class="val w-solid">Solid<i class="caret"></i></span>
      <span class="lab w-stroke">Stroke:</span><span class="val w-normal">Normal<i class="caret"></i></span>
      <i class="sep s1"></i>
      <span class="lab w-color">Color:</span><span class="swatch"><i></i><i></i><i></i></span><span class="val w-blue">Blue<i class="caret"></i></span>
      <i class="toggle"></i><span class="val w-shuffle">Shuffle colors</span>
      <i class="sep s2"></i>
      <span class="lab w-order">Order by:</span><span class="val w-tags">Tags<i class="caret"></i></span>
      <i class="toggle"></i><span class="val">Reverse</span>
    </div>
  </div>
</section>
</main>
<footer class="footer">
  <button class="btn cancel">Cancel</button><button class="btn saveto">Save to...</button><button class="btn save">Save</button>
</footer>
</body>
</html>
```
FILE: styles.css
```css
* { box-sizing: border-box; }
body { margin: 0; width: 1926px; height: 1394px; overflow: hidden; background: #fff; color: #242f3a; font: 26px/1.2 "Noto Sans", sans-serif; }
button { font: inherit; color: inherit; }
i { font-style: normal; display: block; flex: none; }
svg { flex: none; display: block; }
.editor { width: 1922px; height: 1299px; border-right: 2px solid #e2e4e8; }
.chart { overflow: visible; }
.grid { stroke: #e3e4e6; stroke-width: 1.500px; }
.lines polyline { fill: none; stroke-width: 4px; stroke-linejoin: round; stroke-linecap: butt; vector-effect: non-scaling-stroke; }
.dense path { fill: none; }
.c1 { stroke: #213b9d; } .c2 { stroke: #2f51ba; } .c3 { stroke: #365bc6; } .c4 { stroke: #3f67d4; } .c5 { stroke: #4772de; }
.c6 { stroke: #5c89ea; } .c7 { stroke: #6693f0; } .c8 { stroke: #739ff4; } .c9 { stroke: #7ba6f6; }
.spikes polyline { stroke: #94bcfa; }
.axis { font-size: 20px; fill: #242f3a; }
.pi { font-size: 10px; font-weight: 700; fill: #fff; }

.step-head { display: flex; align-items: center; height: 52px; padding-left: 12px; }
.badge { width: 52px; height: 52px; margin-right: 32px; border-radius: 50%; background: #5c2e9e; color: #fff; display: flex; align-items: center; justify-content: center; font-size: 26px; }
.badge.violet { background: #6c2c9f; }
h2 { margin: 0; padding-top: 2px; font-size: 36px; font-weight: 400; line-height: 52px; }
.viz-list { display: flex; flex-wrap: wrap; gap: 16px 15.800px; padding: 16px 100px 0 96px; }
.viz { display: flex; align-items: center; gap: 9px; height: 60px; padding: 0 16.200px 0 17px; border: 0; border-radius: 16px; background: none; font-size: 24px; }
.viz span { padding-top: 2px; }
.viz.active { background: #2c69bf; color: #fff; }
.step-two { padding-top: 48px; }
.body { padding-left: 96px; width: 1888px; }

.tabs { display: flex; height: 90px; padding: 0 22px 0 30px; border-bottom: 2px solid #e0e4ea; color: #687076; line-height: 104px; }
.tab { height: 88px; padding: 0 2px; margin-right: 60px; }
.tab.on { color: #242f3a; border-bottom: 8px solid #2c69bf; }
.help { margin-left: auto; display: flex; align-items: center; gap: 15px; color: #2b67bd; height: 106px; }

.query { display: flex; align-items: stretch; height: 56px; margin-top: 32px; line-height: 30px; }
.cell { flex: none; display: flex; align-items: center; border: 2px solid #c3c7de; border-left: 0; padding: 1px 0 0 16px; }
.key { background: #e2e5ed; color: #687076; padding-left: 12px; }
.letter { width: 58px; flex: none; display: flex; align-items: center; justify-content: center; padding-top: 1px; color: #fff; background: #2c69bf; border: 2px solid #2451b5; border-right: 0; border-radius: 8px 0 0 8px; }
.metrics { width: 200px; border-left: 2px solid #c3c7de; justify-content: space-between; padding-right: 11px; }
.metric { width: 462px; background: #fffed2; }
.from { width: 85px; }
.scope { width: 298px; color: #8b9196; padding-left: 12px; }
.avgby { width: 113px; }
.tags { width: 263px; padding: 0 0 0 6px; gap: 4px; }
.tag { height: 52px; display: flex; align-items: center; justify-content: space-between; background: #fae6f3; padding: 1px 12px 0 8px; }
.tag svg, .close svg, .x { fill: none; stroke: #687076; stroke-width: 1.800px; }
.close svg, .x { stroke-width: 2.400px; }
.env { width: 98px; }
.team { width: 117px; }
.tools { display: flex; align-items: center; margin-left: 113px; color: #687076; }
.tools svg + svg { margin-left: 25px; }
.as { margin-left: 43px; padding-top: 1px; }
.caret { width: 16px; height: 9px; background: #687076; clip-path: polygon(0 0, 100% 0, 50% 100%); }
.caret.big { width: 18px; height: 10px; }

.rollup, .percentile { margin: 8px 0 0 254px; }
.first { width: 99px; border-left: 2px solid #c3c7de; }
.fn { width: 78px; } .every { width: 100px; } .n { width: 180px; } .unit { width: 134px; }
.close { width: 54px; padding: 0; justify-content: center; }
.link { width: 16px; height: 6px; align-self: center; background: #e2e5ed; }
.pfirst { width: 150px; border-left: 2px solid #c3c7de; border-radius: 8px 0 0 8px; }
.p { width: 206px; } .by { width: 52px; padding-left: 11px; }
.ptags { width: 196px; padding: 0 14px 0 6px; border-radius: 0 8px 8px 0; justify-content: space-between; }
.sigma { width: 56px; border: 2px solid #c3c7de; border-radius: 0 8px 8px 0; display: flex; align-items: center; justify-content: center; padding-right: 2px; }

.adds { display: flex; gap: 16px; margin-top: 16px; height: 72px; }
.btn { height: 56px; border: 2px solid #c3c7de; border-radius: 8px; background: #fff; padding: 1px 0 0; }
.add { display: flex; align-items: center; gap: 15px; padding: 0 0 0 23px; }
.add span { padding-top: 1px; }
.q { width: 219px; } .f { width: 246px; }
.options { display: flex; align-items: center; height: 75px; border-top: 2px solid #e0e4ea; padding-left: 2px; font-size: 22.100px; white-space: nowrap; }
.options > * { flex: none; }
.lab { color: #687076; }
.val { display: flex; align-items: center; justify-content: space-between; }
.w-display { width: 109px; } .w-lines { width: 100px; margin-right: 34px; }
.w-style { width: 83px; } .w-solid { width: 96px; margin-right: 34px; }
.w-stroke { width: 100px; } .w-normal { width: 124px; }
.sep { width: 4px; height: 34px; background: #e0e4ec; }
.s1 { margin: 0 34px 0 32px; }
.w-color { width: 99px; }
.swatch { display: flex; gap: 2px; width: 46px; height: 24px; margin-right: 18px; border-radius: 5px; overflow: hidden; }
.swatch i { flex: 1; background: #1b318c; }
.swatch i + i { background: #5b86e8; }
.swatch i + i + i { background: #b0d0fb; }
.w-blue { width: 92px; margin-right: 32px; }
.toggle { width: 52px; height: 30px; margin-right: 12px; border-radius: 15px; background: radial-gradient(circle at 15px 15px, #fff 10.500px, #9ea4ba 11.500px); }
.w-shuffle { width: 141px; }
.s2 { margin: 0 34px 0 32px; }
.w-order { width: 125px; } .w-tags { width: 93px; margin-right: 32px; }

.footer { display: flex; justify-content: flex-end; gap: 16px; height: 95px; padding: 23px 8px 0 0; border-top: 2px solid #e0e4ea; background: linear-gradient(to right, transparent 1150px, #fff 1400px), linear-gradient(to bottom, #fff 35%, #f5f5f5); }
.cancel { width: 125px; } .saveto { width: 153px; }
.save { width: 101px; color: #fff; background: #2c69bf; border-color: #2451b5; }
```
